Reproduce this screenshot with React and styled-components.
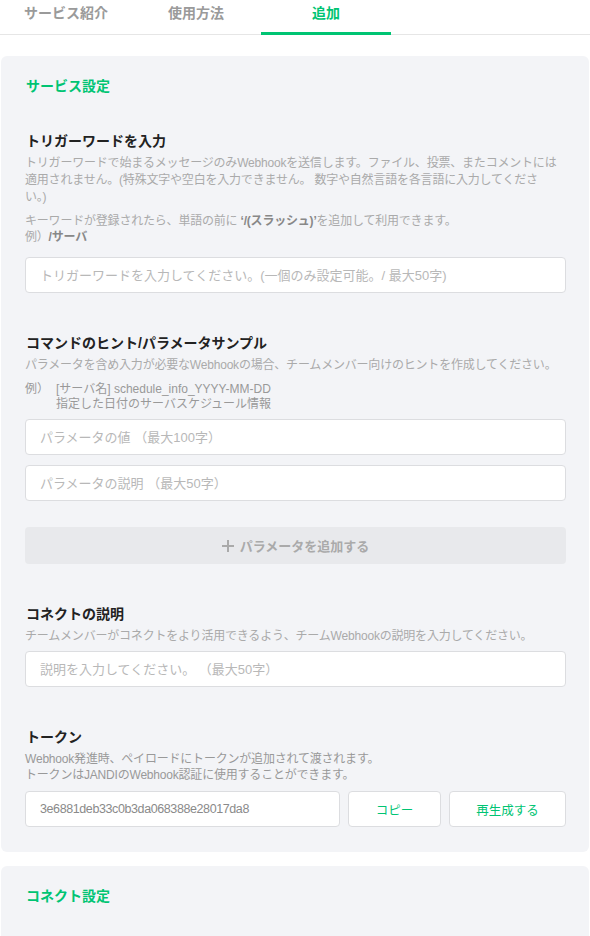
import styled, { createGlobalStyle } from 'styled-components';

const GREEN = '#00c473';

const GlobalStyle = createGlobalStyle`
 * {
  box-sizing: border-box;
 }
 body {
  margin: 0;
  background: #fff;
  font-family: 'Liberation Sans', 'Noto Sans CJK JP', sans-serif;
 }
`;

/* Tabs */
const TabBar = styled.nav`
 display: flex;
 height: 35px;
 padding-left: 1px;
 border-bottom: 1px solid #e6e6e6;
`;

const Tab = styled.div`
 width: 130px;
 height: 35px;
 margin-bottom: -1px;
 padding-top: 3px;
 line-height: 20px;
 text-align: center;
 font-size: 14px;
 font-weight: 700;
 color: ${(p) => (p.$active ? GREEN : '#9a9a9a')};
 border-bottom: 3px solid ${(p) => (p.$active ? GREEN : 'transparent')};
 cursor: pointer;
`;

/* Cards */
const Page = styled.main`
 padding: 21px 1px 0;
`;

const Card = styled.section`
 background: #f3f4f7;
 border-radius: 6px;
 padding: 20px 23px ${(p) => p.$bottom || '25px'} 24px;
 & + & {
  margin-top: 14px;
 }
`;

const CardTitle = styled.h2`
 margin: 0 0 35px 1px;
 font-size: 14px;
 line-height: 20px;
 font-weight: 700;
 color: ${GREEN};
`;

const Section = styled.div`
 & + & {
  margin-top: 40px;
 }
`;

const Label = styled.h3`
 margin: 0 0 0 1px;
 font-size: 14px;
 line-height: 20px;
 font-weight: 700;
 color: #222;
`;

const Desc = styled.p`
 margin: ${(p) => p.$mt || '4px'} 0 0;
 font-size: 12px;
 line-height: ${(p) => p.$lh || '17px'};
 letter-spacing: -0.2px;
 color: ${(p) => p.$tone || '#aaa'};
 b {
  font-weight: 700;
  color: #888;
 }
`;

const Example = styled.div`
 display: flex;
 margin-top: 8px;
 font-size: 12px;
 line-height: 15px;
 color: #999;
`;

const ExampleMark = styled.span`
 width: 31px;
 flex-shrink: 0;
`;

const Input = styled.input`
 display: block;
 width: 100%;
 height: 36px;
 margin-top: ${(p) => p.$mt || '10px'};
 padding: 0 14px;
 border: 1px solid #dcdde0;
 border-radius: 4px;
 background: #fff;
 font-family: inherit;
 font-size: 13px;
 color: #8a8a8a;
 outline: none;
 &::placeholder {
  color: #b8b8b8;
 }
`;

const AddButton = styled.button`
 display: flex;
 align-items: center;
 justify-content: center;
 gap: 6px;
 width: 100%;
 height: 37px;
 margin-top: 26px;
 border: none;
 border-radius: 4px;
 background: #e8e9ec;
 font-family: inherit;
 font-size: 13px;
 font-weight: 700;
 color: #aaa;
 cursor: pointer;
`;

const TokenRow = styled.div`
 display: flex;
 gap: 8px;
 margin-top: 8px;
 ${Input} {
  flex: 1;
  margin-top: 0;
  font-size: 12.5px;
  letter-spacing: -0.4px;
 }
`;

const GhostButton = styled.button`
 width: ${(p) => p.$w};
 height: 36px;
 flex-shrink: 0;
 border: 1px solid #dcdde0;
 border-radius: 4px;
 background: #fff;
 font-family: inherit;
 font-size: 12.5px;
 color: ${GREEN};
 cursor: pointer;
`;

const PlusIcon = () => (
 <svg width='12' height='12' viewBox='0 0 12 12'>
  <path d='M6 0v12M0 6h12' stroke='#aaa' strokeWidth='2' />
 </svg>
);

export default function App() {
 return (
  <>
   <GlobalStyle />
   <TabBar>
    <Tab>サービス紹介</Tab>
    <Tab>使用方法</Tab>
    <Tab $active>追加</Tab>
   </TabBar>

   <Page>
    <Card>
     <CardTitle>サービス設定</CardTitle>

     <Section>
      <Label>トリガーワードを入力</Label>
      <Desc>
       トリガーワードで始まるメッセージのみWebhookを送信します。ファイル、投票、またコメントには
       <br />
       適用されません。(特殊文字や空白を入力できません。 数字や自然言語を各言語に入力してくださ
       <br />
       い。)
      </Desc>
      <Desc $mt='7px' $lh='16px'>
       キーワードが登録されたら、単語の前に <b>‘/(スラッシュ)’</b>を追加して利用できます。
       <br />
       例）<b>/サーバ</b>
      </Desc>
      <Input $mt='12px' placeholder='トリガーワードを入力してください。(一個のみ設定可能。/ 最大50字)' />
     </Section>

     <Section>
      <Label>コマンドのヒント/パラメータサンプル</Label>
      <Desc>パラメータを含め入力が必要なWebhookの場合、チームメンバー向けのヒントを作成してください。</Desc>
      <Example>
       <ExampleMark>例）</ExampleMark>
       <div>
        [サーバ名] schedule_info_YYYY-MM-DD
        <br />
        指定した日付のサーバスケジュール情報
       </div>
      </Example>
      <Input $mt='7px' placeholder='パラメータの値 （最大100字）' />
      <Input placeholder='パラメータの説明 （最大50字）' />
      <AddButton>
       <PlusIcon />
       パラメータを追加する
      </AddButton>
     </Section>

     <Section>
      <Label>コネクトの説明</Label>
      <Desc>チームメンバーがコネクトをより活用できるよう、チームWebhookの説明を入力してください。</Desc>
      <Input $mt='6px' placeholder='説明を入力してください。 （最大50字）' />
     </Section>

     <Section>
      <Label>トークン</Label>
      <Desc $lh='16px' $tone='#999'>
       Webhook発進時、ペイロードにトークンが追加されて渡されます。
       <br />
       トークンはJANDIのWebhook認証に使用することができます。
      </Desc>
      <TokenRow>
       <Input readOnly defaultValue='3e6881deb33c0b3da068388e28017da8' />
       <GhostButton $w='93px'>コピー</GhostButton>
       <GhostButton $w='117px'>再生成する</GhostButton>
      </TokenRow>
     </Section>
    </Card>

    <Card $bottom='40px'>
     <CardTitle>コネクト設定</CardTitle>
    </Card>
   </Page>
  </>
 );
}
